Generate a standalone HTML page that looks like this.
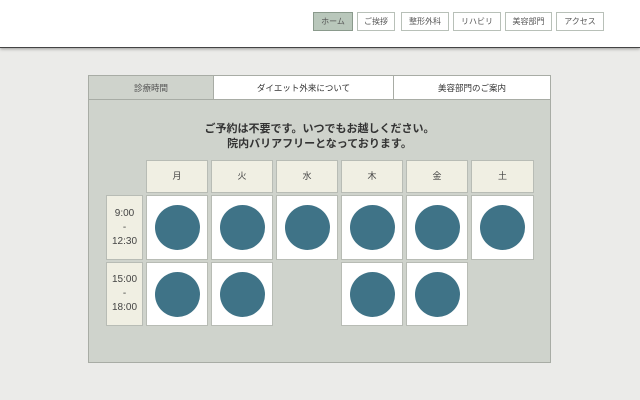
<!DOCTYPE html>
<html><head><meta charset="utf-8"><style>
*{margin:0;padding:0;box-sizing:border-box}
body{width:640px;height:400px;background:#ebebe9;font-family:"Liberation Sans","Noto Sans CJK JP",sans-serif;position:relative;overflow:hidden}
.hd{position:absolute;left:0;top:0;width:640px;height:48px;background:#fff;border-bottom:1px solid #444;box-shadow:0 1px 3px rgba(0,0,0,.35)}
.nb{position:absolute;top:12px;height:19px;border:1px solid #b8c0b8;background:#fff;font-size:8px;color:#555;text-align:center;line-height:17px}
.nb.a{background:#b9c7bb;border-color:#8a9a8c}
.p{position:absolute;left:88px;top:75px;width:463px;height:288px;background:#cfd3cc;border:1px solid #a8aca5}
.t{position:absolute;top:75px;height:25px;font-size:8.5px;color:#333;text-align:center;line-height:24px;border:1px solid #a8aca5;background:#fff}
.msg{position:absolute;left:88px;width:463px;text-align:center;font-size:11px;font-weight:bold;color:#333}
.c{position:absolute;background:#fff;border:1px solid #b8bcb5}
.d{background:#f0efe3;font-size:9px;color:#444;text-align:center;line-height:31px}
.tm{background:#f0efe3;font-size:10px;color:#444;text-align:center;display:flex;align-items:center;justify-content:center;line-height:14px}
.o::after{content:"";position:absolute;left:8px;top:9px;width:45px;height:45px;border-radius:50%;background:#3f7387}
</style></head><body>
<div class="hd"></div>
<div class="nb a" style="left:313px;width:40px">ホーム</div>
<div class="nb" style="left:357px;width:38px">ご挨拶</div>
<div class="nb" style="left:401px;width:48px">整形外科</div>
<div class="nb" style="left:453px;width:48px">リハビリ</div>
<div class="nb" style="left:505px;width:47px">美容部門</div>
<div class="nb" style="left:556px;width:48px">アクセス</div>
<div class="p"></div>
<div class="t" style="left:88px;width:126px;background:#cfd3cc;color:#555">診療時間</div>
<div class="t" style="left:213px;width:181px">ダイエット外来について</div>
<div class="t" style="left:393px;width:158px">美容部門のご案内</div>
<div class="msg" style="top:120px">ご予約は不要です。いつでもお越しください。</div>
<div class="msg" style="top:135px">院内バリアフリーとなっております。</div>
<div class="c d" style="left:146px;top:160px;width:62px;height:33px">月</div>
<div class="c d" style="left:211px;top:160px;width:62px;height:33px">火</div>
<div class="c d" style="left:276px;top:160px;width:62px;height:33px">水</div>
<div class="c d" style="left:341px;top:160px;width:62px;height:33px">木</div>
<div class="c d" style="left:406px;top:160px;width:62px;height:33px">金</div>
<div class="c d" style="left:471px;top:160px;width:63px;height:33px">土</div>
<div class="c tm" style="left:106px;top:195px;width:37px;height:65px">9:00<br>-<br>12:30</div>
<div class="c tm" style="left:106px;top:262px;width:37px;height:64px">15:00<br>-<br>18:00</div>
<div class="c o" style="left:146px;top:195px;width:62px;height:65px"></div>
<div class="c o" style="left:211px;top:195px;width:62px;height:65px"></div>
<div class="c o" style="left:276px;top:195px;width:62px;height:65px"></div>
<div class="c o" style="left:341px;top:195px;width:62px;height:65px"></div>
<div class="c o" style="left:406px;top:195px;width:62px;height:65px"></div>
<div class="c o" style="left:471px;top:195px;width:63px;height:65px"></div>
<div class="c o" style="left:146px;top:262px;width:62px;height:64px"></div>
<div class="c o" style="left:211px;top:262px;width:62px;height:64px"></div>
<div class="c o" style="left:341px;top:262px;width:62px;height:64px"></div>
<div class="c o" style="left:406px;top:262px;width:62px;height:64px"></div>
</body></html>
